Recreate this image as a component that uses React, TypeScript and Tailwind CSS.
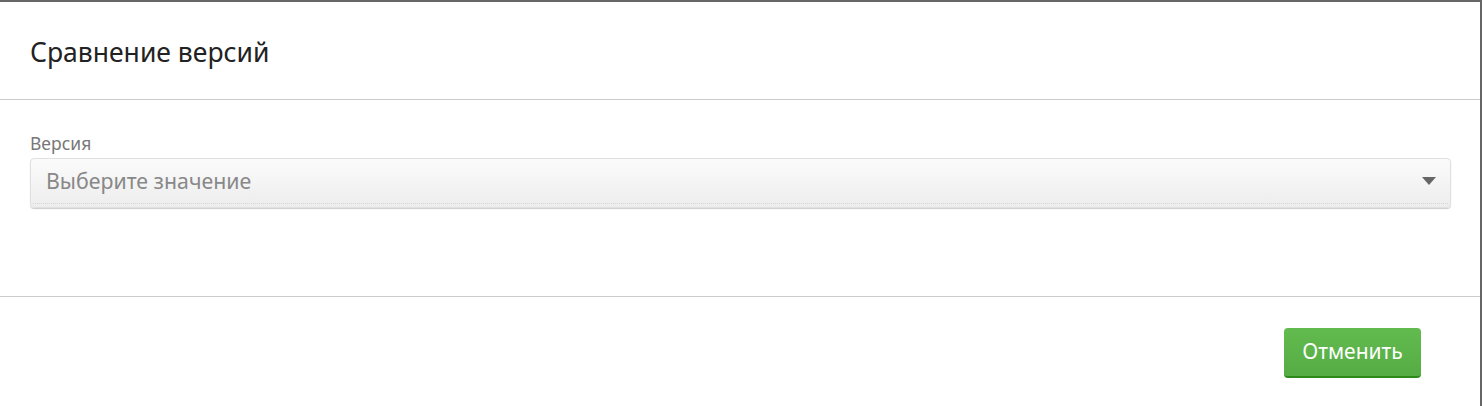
import * as React from "react";

// Диалог сравнения версий
export default function App() {
  return (
    <div className="w-[1482px] h-[406px] bg-white border-t-2 border-r-2 border-[#666] font-['Noto_Sans',sans-serif] flex flex-col">
      {/* Шапка */}
      <div className="h-[98px] shrink-0 border-b border-[#ccc] flex items-center px-[30px]">
        <h1 className="text-[26.5px] leading-none text-[#222] pt-[3px]">Сравнение версий</h1>
      </div>

      {/* Тело */}
      <div className="h-[197px] shrink-0 border-b border-[#ccc] px-[30px] pt-[29px]">
        <div className="text-[17.5px] leading-[28px] text-[#777]">Версия</div>
        <div className="mt-[1px] w-[1421px] h-[50px] rounded-[4px] border border-[#e0e0e0] bg-gradient-to-b from-[#fbfbfb] to-[#ededed] shadow-[0_1px_1px_rgba(0,0,0,0.2)] flex flex-col">
          <div className="flex-1 flex items-center justify-between pl-[15px] pr-[14px]">
            <span className="text-[21.3px] text-[#888]">Выберите значение</span>
            <svg width="14" height="8" viewBox="0 0 14 8">
              <path d="M0 0 H14 L7 8 Z" fill="#666" />
            </svg>
          </div>
          <div className="mx-[2px] mb-[3px] border-b border-dotted border-[#d6d6d6]" />
        </div>
      </div>

      {/* Подвал */}
      <div className="flex-1 flex justify-end items-start pt-[31px] pr-[59px]">
        <button className="w-[137px] h-[50px] rounded-[4px] bg-gradient-to-b from-[#62bb4f] to-[#56ac44] border-b-2 border-[#2f8a1c] text-white text-[21px] leading-none pb-[2px]">
          Отменить
        </button>
      </div>
    </div>
  );
}
